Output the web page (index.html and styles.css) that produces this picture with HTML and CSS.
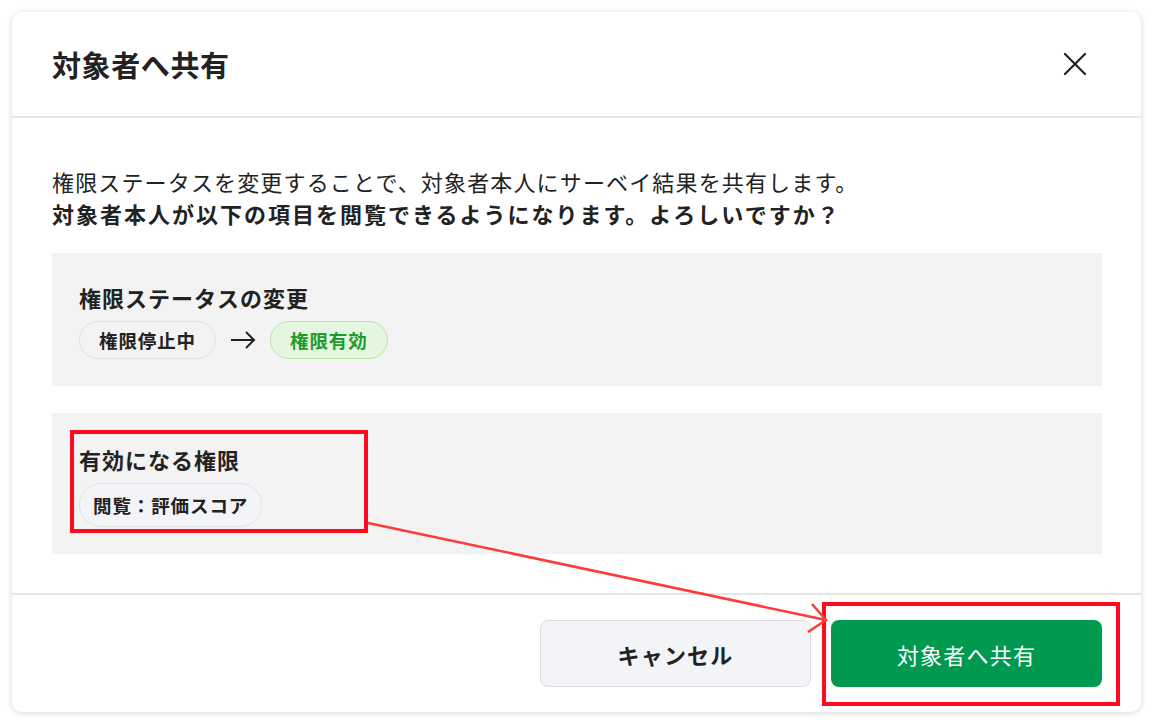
FILE: index.html
```html
<html>
<head>
	<title>対象者へ共有</title>
	<link rel="stylesheet" href="styles.css">
</head>
<body>
	<div class="dialog">
		<div class="dialog_header">
			<div class="dialog_title">対象者へ共有</div>
			<svg class="close_icon" width="24" height="24" viewBox="0 0 24 24">
				<path d="M2 2 L22 22 M22 2 L2 22" stroke="#222" stroke-width="2.2" stroke-linecap="round" fill="none"/>
			</svg>
		</div>
		<div class="dialog_body">
			<p class="lead">権限ステータスを変更することで、対象者本人にサーベイ結果を共有します。<br><b>対象者本人が以下の項目を閲覧できるようになります。よろしいですか？</b></p>
			<div class="info_box first">
				<div class="box_title">権限ステータスの変更</div>
				<div class="chip_row">
					<span class="chip">権限停止中</span>
					<svg class="arrow_icon" width="26" height="20" viewBox="0 0 26 20">
						<path d="M1 10 H24 M16 2 L24 10 L16 18" stroke="#222" stroke-width="2" fill="none"/>
					</svg>
					<span class="chip green">権限有効</span>
				</div>
			</div>
			<div class="info_box second">
				<div class="box_title">有効になる権限</div>
				<div class="chip_row">
					<span class="chip tall">閲覧：評価スコア</span>
				</div>
			</div>
		</div>
		<div class="dialog_footer">
			<button class="btn cancel">キャンセル</button>
			<button class="btn share">対象者へ共有</button>
		</div>
	</div>
	<!-- annotation overlay -->
	<svg class="marks" width="1154" height="720" viewBox="0 0 1154 720">
		<rect x="72" y="432" width="294" height="99" stroke="#ff0a1e" stroke-width="4" fill="none"/>
		<rect x="824" y="604" width="294" height="100" stroke="#ff0a1e" stroke-width="4" fill="none"/>
		<path d="M368 523 L826 620 M812 604 L826 620 L808 632" stroke="#ff3a3a" stroke-width="2.5" fill="none"/>
	</svg>
</body>
</html>
```

FILE: styles.css
```css
body {
	margin: 0;
	background-color: white;
	color: #222;
	font-family: "Noto Sans CJK JP", "Noto Sans", sans-serif;
}

.dialog {
	margin: 12px 13px 0 12px;
	width: 1129px;
	height: 700px;
	background: white;
	border-radius: 10px;
	box-shadow: 0 1px 6px rgba(0,0,0,0.16);
	display: flex;
	flex-direction: column;
	box-sizing: border-box;
}
.dialog_header {
	height: 106px;
	display: flex;
	align-items: center;
	justify-content: space-between;
	padding: 0 54px 0 40px;
	border-bottom: 2px solid #e6e6e6;
	box-sizing: border-box;
}
.dialog_title {
	font-size: 29px;
	font-weight: bold;
	letter-spacing: 0.6px;
}

.dialog_body {
	padding: 47px 39px 39px 40px;
	border-bottom: 2px solid #e6e6e6;
}
.lead {
	margin: 0 0 24px 0;
	font-size: 22px;
	line-height: 32px;
	letter-spacing: 1.15px;
}
.lead b {
	letter-spacing: 2px;
}
.info_box {
	background: #f3f3f3;
	padding: 28px 27px 27px 27px;
}
.info_box.second {
	margin-top: 27px;
	padding-top: 30px;
	padding-bottom: 27px;
}
.box_title {
	font-size: 22px;
	font-weight: bold;
	line-height: 32px;
	letter-spacing: 1px;
}
.chip_row {
	margin-top: 8px;
	display: flex;
	align-items: center;
	gap: 14px;
}
.chip {
	height: 38px;
	box-sizing: border-box;
	padding: 0 19px;
	border: 1.5px solid #e2e2e2;
	background: #f3f3f3;
	border-radius: 20px;
	font-size: 18.5px;
	font-weight: bold;
	display: flex;
	align-items: center;
	letter-spacing: 0.9px;
}
.chip.green {
	background: #e4f6df;
	border-color: #b9e6ad;
	color: #1e9b2a;
}
.chip.tall {
	height: 44px;
	border-radius: 22px;
	background: #f3f4f7;
	padding: 0 13px;
}

.dialog_footer {
	flex: 1;
	display: flex;
	justify-content: flex-end;
	align-items: flex-start;
	gap: 20px;
	padding: 25px 39px 0 0;
}
.btn {
	width: 271px;
	height: 67px;
	border-radius: 8px;
	font-family: "Noto Sans CJK JP", "Noto Sans", sans-serif;
	font-size: 22px;
	font-weight: bold;
	letter-spacing: 1.2px;
}
.cancel {
	background: #f3f4f7;
	border: 1.5px solid #dcdde0;
	color: #222;
}
.share {
	background: #00994f;
	border: none;
	color: white;
	font-weight: normal;
}

.marks {
	position: absolute;
	left: 0;
	top: 0;
	pointer-events: none;
}
```
